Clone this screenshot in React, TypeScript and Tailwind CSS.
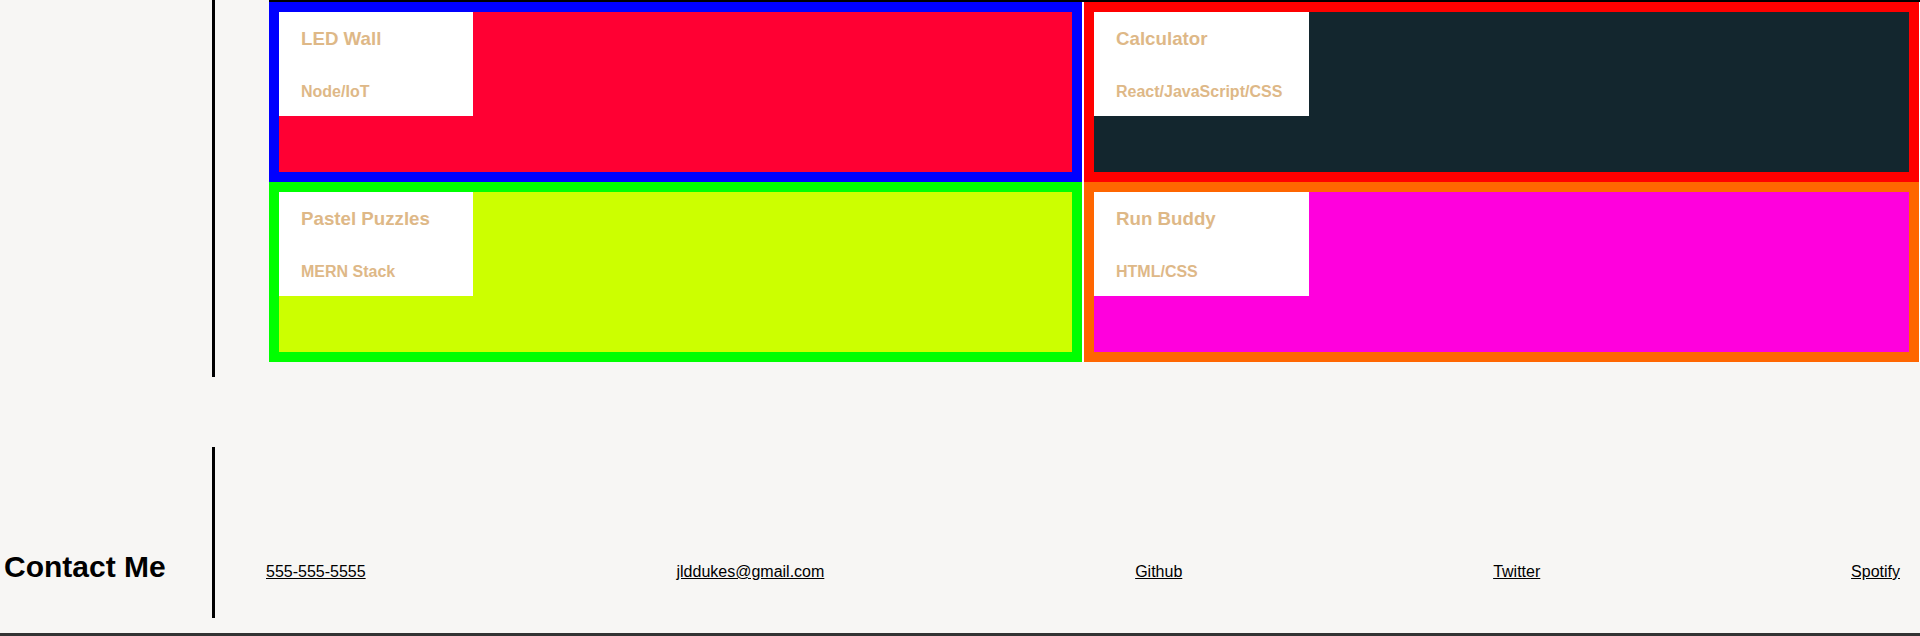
const projects = [
  {
    title: "LED Wall",
    tech: "Node/IoT",
    border: "border-[#0000ff]",
    fill: "bg-[#ff0033]",
    box: "w-[194px]",
  },
  {
    title: "Pastel Puzzles",
    tech: "MERN Stack",
    border: "border-[#00ff00]",
    fill: "bg-[#ccff00]",
    box: "w-[194px]",
  },
  {
    title: "Calculator",
    tech: "React/JavaScript/CSS",
    border: "border-[#ff0000]",
    fill: "bg-[#13262e]",
    box: "w-[215px]",
  },
  {
    title: "Run Buddy",
    tech: "HTML/CSS",
    border: "border-[#ff6600]",
    fill: "bg-[#ff00dd]",
    box: "w-[215px]",
  },
];

const links = ["555-555-5555", "jlddukes@gmail.com", "Github", "Twitter", "Spotify"];

type Project = (typeof projects)[number];

const ProjectCard = ({ project }: { project: Project }) => (
  <div className={`h-[180px] border-[10px] ${project.border} ${project.fill}`}>
    <div className={`h-[104px] bg-white pl-[22px] pt-[16px] ${project.box}`}>
      <h3 className="mb-[33px] text-[18.72px] font-bold leading-[22px] text-[#deb887]">
        {project.title}
      </h3>
      <h4 className="text-base font-bold leading-[18px] text-[#deb887]">{project.tech}</h4>
    </div>
  </div>
);

const App = () => {
  return (
    <div className="h-[636px] overflow-hidden bg-[#f7f6f4] font-['Liberation_Sans',Arial,sans-serif] text-black">
      <section className="flex h-[377px]">
        <div className="w-[215px] shrink-0 border-r-[3px] border-black" />
        <div className="flex-1 pl-[54px]">
          <div className="flex gap-[2px] border-t-2 border-black bg-white pr-[1px]">
            <div className="flex w-[813px] flex-col">
              <ProjectCard project={projects[0]} />
              <ProjectCard project={projects[1]} />
            </div>
            <div className="flex flex-1 flex-col">
              <ProjectCard project={projects[2]} />
              <ProjectCard project={projects[3]} />
            </div>
          </div>
        </div>
      </section>

      <section className="mt-[70px] flex h-[171px]">
        <div className="flex w-[215px] shrink-0 items-end border-r-[3px] border-black pb-[34px] pl-[4px]">
          <h2 className="text-[30px] font-bold leading-[35px]">Contact Me</h2>
        </div>
        <ul className="flex flex-1 items-end justify-between pb-[37px] pl-[51px] pr-[20px] text-base leading-[18px]">
          {links.map((link) => (
            <li key={link}>
              <a href="#" className="text-black underline">
                {link}
              </a>
            </li>
          ))}
        </ul>
      </section>

      <div className="mt-[15px] h-[3px] bg-[#333]" />
    </div>
  );
};

export default App;
